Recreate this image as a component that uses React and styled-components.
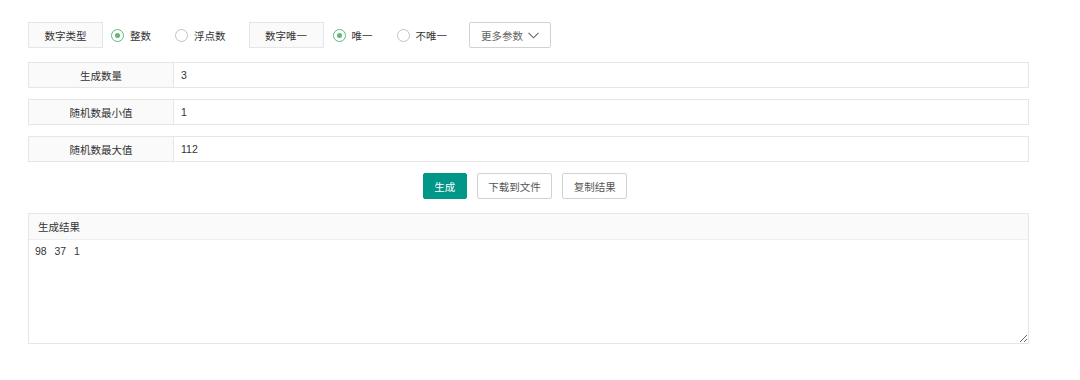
import React from "react";
import styled, { createGlobalStyle } from "styled-components";

const Global = createGlobalStyle`
  html, body { margin: 0; padding: 0; background: #fff; }
  body {
    font-family: "Liberation Sans", Arial, "Noto Sans CJK SC", sans-serif;
    font-size: 10.5px;
    color: #333;
  }
  * { box-sizing: border-box; }
`;

const Page = styled.div`
  padding: 22px 0 0 28px;
  width: 1029px;
`;

const Toolbar = styled.div`
  display: flex;
  align-items: center;
  height: 26px;
  margin-bottom: 14px;
`;

const PaneLabel = styled.div`
  width: 75px;
  height: 26px;
  margin-left: ${(p) => p.$ml || 0}px;
  display: flex;
  align-items: center;
  justify-content: center;
  background: #fafafa;
  border: 1px solid #e6e6e6;
  color: #333;
  flex: none;
`;

const RadioItem = styled.label`
  display: flex;
  align-items: center;
  margin-left: ${(p) => p.$ml}px;
  color: #333;
  cursor: pointer;
`;

const Circle = styled.span`
  width: 13px;
  height: 13px;
  border-radius: 50%;
  border: 1px solid ${(p) => (p.$on ? "#5FB878" : "#c2c2c2")};
  display: flex;
  align-items: center;
  justify-content: center;
  margin-right: 6px;
  &::after {
    content: "";
    width: 5px;
    height: 5px;
    border-radius: 50%;
    background: ${(p) => (p.$on ? "#5FB878" : "transparent")};
  }
`;

const MoreButton = styled.button`
  margin-left: 22px;
  height: 26px;
  width: 82px;
  border: 1px solid #d2d2d2;
  background: #fff;
  color: #666;
  font: inherit;
  border-radius: 2px;
  display: flex;
  align-items: center;
  justify-content: center;
  gap: 5px;
  padding: 0;
`;

const FieldRow = styled.div`
  display: flex;
  height: 26px;
  width: 1001px;
  border: 1px solid #e6e6e6;
  margin-bottom: 11px;
`;

const FieldLabel = styled.div`
  width: 145px;
  flex: none;
  background: #fafafa;
  border-right: 1px solid #e6e6e6;
  display: flex;
  align-items: center;
  justify-content: center;
  color: #333;
`;

const FieldValue = styled.div`
  flex: 1;
  display: flex;
  align-items: center;
  padding-left: 7px;
  color: #333;
`;

const Actions = styled.div`
  display: flex;
  justify-content: center;
  gap: 10px;
  width: 994px;
  margin-bottom: 14px;
`;

const Btn = styled.button`
  height: 26px;
  padding: 0 10.5px;
  border-radius: 2px;
  font: inherit;
  border: 1px solid ${(p) => (p.$primary ? "#009688" : "#d2d2d2")};
  background: ${(p) => (p.$primary ? "#009688" : "#fff")};
  color: ${(p) => (p.$primary ? "#fff" : "#555")};
`;

const ResultBox = styled.div`
  width: 1001px;
  border: 1px solid #e6e6e6;
  display: flex;
  flex-direction: column;
`;

const ResultHead = styled.div`
  height: 26px;
  background: #fafafa;
  border-bottom: 1px solid #eee;
  display: flex;
  align-items: center;
  padding-left: 9px;
  color: #333;
`;

const ResultArea = styled.textarea`
  display: block;
  width: 100%;
  height: 103px;
  border: none;
  outline: none;
  padding: 5px 6px;
  font: inherit;
  word-spacing: 1px;
  color: #333;
  resize: vertical;
  white-space: pre;
`;

function Radio({ on, label, ml }) {
  return (
    <RadioItem $ml={ml}>
      <Circle $on={on} />
      {label}
    </RadioItem>
  );
}

function Chevron() {
  return (
    <svg width="11" height="7" viewBox="0 0 11 7" fill="none">
      <path d="M0.5 0.8 L5.5 5.8 L10.5 0.8" stroke="#666" strokeWidth="1.1" />
    </svg>
  );
}

const fields = [
  ["生成数量", "3"],
  ["随机数最小值", "1"],
  ["随机数最大值", "112"],
];

export default function App() {
  return (
    <>
      <Global />
      <Page>
        <Toolbar>
          <PaneLabel>数字类型</PaneLabel>
          <Radio on label="整数" ml={8} />
          <Radio label="浮点数" ml={24} />
          <PaneLabel $ml={23}>数字唯一</PaneLabel>
          <Radio on label="唯一" ml={9} />
          <Radio label="不唯一" ml={24} />
          <MoreButton>
            更多参数 <Chevron />
          </MoreButton>
        </Toolbar>
        {fields.map(([k, v]) => (
          <FieldRow key={k}>
            <FieldLabel>{k}</FieldLabel>
            <FieldValue>{v}</FieldValue>
          </FieldRow>
        ))}
        <Actions>
          <Btn $primary>生成</Btn>
          <Btn>下载到文件</Btn>
          <Btn>复制结果</Btn>
        </Actions>
        <ResultBox>
          <ResultHead>生成结果</ResultHead>
          <ResultArea readOnly value={"98  37  1"} />
        </ResultBox>
      </Page>
    </>
  );
}
